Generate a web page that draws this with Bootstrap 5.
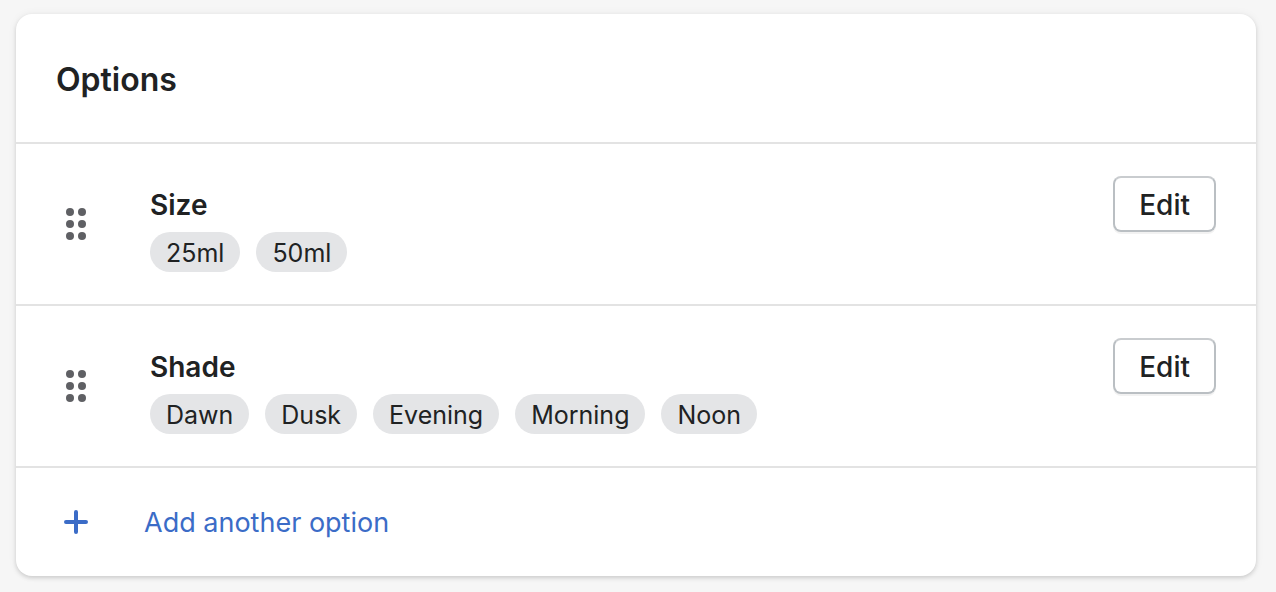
<!DOCTYPE html>
<html lang="en">
<head>
<meta charset="utf-8">
<meta name="viewport" content="width=device-width, initial-scale=1">
<title>Options</title>
<link href="https://cdn.jsdelivr.net/npm/bootstrap@5.3.0/dist/css/bootstrap.min.css" rel="stylesheet">
<style>
  body { background: #f6f6f6; color: #202223; font-family: Inter, "Liberation Sans", sans-serif; }
  .page { padding: 14px 20px 16px 16px; }
  .options-card { --bs-card-border-width: 0; --bs-card-border-radius: 16px; --bs-card-color: #202223; box-shadow: 0 0 10px rgba(23,24,24,.05), 0 2px 4px rgba(0,0,0,.15); }
  .options-title { font-size: 32px; line-height: 48px; font-weight: 600; padding: 42px 40px 38px; }
  .option-row { border-top: 2px solid #e3e3e3; padding: 32px 40px; }
  .drag-handle { width: 40px; margin-right: 54px; color: #5f6064; line-height: 0; cursor: grab; }
  .option-name { font-size: 28px; line-height: 38px; font-weight: 600; padding-top: 10px; margin-bottom: 8px; }
  .chips { gap: 16px; }
  .chip { background: #e4e5e7; border-radius: 20px; font-size: 25px; line-height: 38px; padding: 2px 16px 0; }
  .edit-btn { --bs-btn-color: #202223; --bs-btn-bg: #fff; --bs-btn-border-color: #babfc3; --bs-btn-hover-color: #202223; --bs-btn-hover-bg: #f6f6f7; --bs-btn-hover-border-color: #babfc3; font-size: 28px; line-height: 38px; font-weight: 500; border-width: 2px; border-top-color: #c9cccf; border-radius: 8px; padding: 8px 24px 6px; box-shadow: 0 2px 0 rgba(0,0,0,.05); }
  .add-row { border-top: 2px solid #e3e3e3; padding: 34px 40px; color: #3b6cc7; }
  .add-icon { margin-right: 48px; }
  .add-link { color: inherit; font-size: 27px; line-height: 38px; padding-top: 2px; }
</style>
</head>
<body>
<svg class="d-none" aria-hidden="true">
  <symbol id="drag-dots" viewBox="0 0 20 20">
    <circle cx="7" cy="4" r="2"/><circle cx="13" cy="4" r="2"/>
    <circle cx="7" cy="10" r="2"/><circle cx="13" cy="10" r="2"/>
    <circle cx="7" cy="16" r="2"/><circle cx="13" cy="16" r="2"/>
  </symbol>
</svg>
<main class="page">
  <section class="card options-card">
    <h1 class="options-title mb-0">Options</h1>
    <ul class="list-unstyled mb-0">
      <li class="option-row d-flex align-items-start">
        <button type="button" class="drag-handle btn border-0 p-0 align-self-center" aria-label="Reorder Size">
          <svg width="40" height="40" fill="currentColor" aria-hidden="true"><use href="#drag-dots"/></svg>
        </button>
        <div class="flex-grow-1">
          <h2 class="option-name">Size</h2>
          <div class="chips d-flex flex-wrap">
            <span class="chip">25ml</span>
            <span class="chip">50ml</span>
          </div>
        </div>
        <button type="button" class="btn edit-btn">Edit</button>
      </li>
      <li class="option-row d-flex align-items-start">
        <button type="button" class="drag-handle btn border-0 p-0 align-self-center" aria-label="Reorder Shade">
          <svg width="40" height="40" fill="currentColor" aria-hidden="true"><use href="#drag-dots"/></svg>
        </button>
        <div class="flex-grow-1">
          <h2 class="option-name">Shade</h2>
          <div class="chips d-flex flex-wrap">
            <span class="chip">Dawn</span>
            <span class="chip">Dusk</span>
            <span class="chip">Evening</span>
            <span class="chip">Morning</span>
            <span class="chip">Noon</span>
          </div>
        </div>
        <button type="button" class="btn edit-btn">Edit</button>
      </li>
    </ul>
    <div class="add-row d-flex align-items-center">
      <svg class="add-icon" width="40" height="40" viewBox="0 0 40 40" fill="none" stroke="currentColor" stroke-width="4" stroke-linecap="round" aria-hidden="true"><path d="M20 10v20M10 20h20"/></svg>
      <a class="add-link text-decoration-none" href="#">Add another option</a>
    </div>
  </section>
</main>
<script src="https://cdn.jsdelivr.net/npm/bootstrap@5.3.0/dist/js/bootstrap.bundle.min.js"></script>
</body>
</html>
